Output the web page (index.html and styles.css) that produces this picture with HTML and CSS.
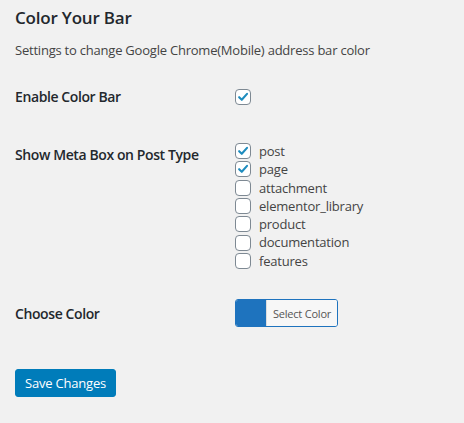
FILE: index.html
```html
<!DOCTYPE html>
<html>
<head>
<meta charset="utf-8">
<link rel="stylesheet" href="styles.css">
</head>
<body>
<div class="wrap">
  <h2 class="title">Color Your Bar</h2>
  <p class="desc">Settings to change Google Chrome(Mobile) address bar color</p>
  <div class="form-table">
    <div class="row row-enable">
      <div class="th">Enable Color Bar</div>
      <div class="td">
        <span class="cb checked"><svg viewBox="0 0 16 16"><path d="M3.6 8.2 L6.6 11.2 L12.6 4.4" /></svg></span>
      </div>
    </div>
    <div class="row">
      <div class="th">Show Meta Box on Post Type</div>
      <div class="td list">
        <label class="item"><span class="cb checked"><svg viewBox="0 0 16 16"><path d="M3.6 8.2 L6.6 11.2 L12.6 4.4" /></svg></span>post</label>
        <label class="item"><span class="cb checked"><svg viewBox="0 0 16 16"><path d="M3.6 8.2 L6.6 11.2 L12.6 4.4" /></svg></span>page</label>
        <label class="item"><span class="cb"></span>attachment</label>
        <label class="item"><span class="cb"></span>elementor_library</label>
        <label class="item"><span class="cb"></span>product</label>
        <label class="item"><span class="cb"></span>documentation</label>
        <label class="item"><span class="cb"></span>features</label>
      </div>
    </div>
    <div class="row row-color">
      <div class="th">Choose Color</div>
      <div class="td">
        <button class="color-result"><span class="swatch"></span><span class="color-text">Select Color</span></button>
      </div>
    </div>
  </div>
  <div class="submit">
    <button class="button-primary">Save Changes</button>
  </div>
</div>
</body>
</html>
```
FILE: styles.css
```css
html, body {
  margin: 0;
  padding: 0;
  background: #f1f1f1;
}
body {
  font-family: "Open Sans", "Noto Sans", sans-serif;
  font-size: 13px;
  color: #444;
}
.wrap {
  padding: 7px 15px 0 15px;
}
.title {
  margin: 0;
  font-size: 17px;
  line-height: 22px;
  font-weight: 600;
  color: #23282d;
  letter-spacing: -0.2px;
}
.desc {
  margin: 11px 0 8px 0;
  line-height: 20px;
  color: #444;
  letter-spacing: -0.22px;
}
.row {
  display: flex;
}
.th {
  width: 200px;
  padding: 20px 10px 20px 0;
  font-size: 14px;
  font-weight: 600;
  line-height: 18px;
  color: #23282d;
  letter-spacing: -0.4px;
}
.td {
  padding: 15px 10px;
  display: flex;
  flex-direction: column;
}
.row-enable .td {
  padding-top: 21px;
}
.list {
  padding-top: 16px;
}
.row-color .td {
  padding-top: 14px;
}
.item {
  display: flex;
  align-items: center;
  line-height: 18.3px;
  height: 18.3px;
  color: #444;
  letter-spacing: -0.2px;
}
.cb {
  box-sizing: border-box;
  width: 16px;
  height: 16px;
  border: 1px solid #7e8993;
  border-radius: 4px;
  background: #fff;
  display: inline-flex;
  align-items: center;
  justify-content: center;
  flex: none;
  margin-right: 8px;
}
.cb svg {
  width: 14px;
  height: 14px;
}
.cb svg path {
  fill: none;
  stroke: #1e8cbe;
  stroke-width: 2.4;
  stroke-linecap: round;
  stroke-linejoin: round;
}
.color-result {
  box-sizing: border-box;
  display: flex;
  align-items: stretch;
  width: 103px;
  height: 28px;
  padding: 0;
  margin: 0;
  border: 1px solid #1e73be;
  border-radius: 3px;
  overflow: hidden;
  background: #f7f7f7;
  font-family: inherit;
  cursor: pointer;
}
.swatch {
  width: 30px;
  background: #1e73be;
  flex: none;
}
.color-text {
  flex: 1;
  display: flex;
  align-items: center;
  justify-content: center;
  font-size: 11px;
  color: #555;
  border-left: 1px solid #ddd;
  background: #f7f7f7;
  letter-spacing: -0.2px;
}
.submit {
  padding-top: 26px;
}
.button-primary {
  box-sizing: border-box;
  height: 28px;
  width: 101px;
  padding: 0;
  white-space: nowrap;
  border: 1px solid #007cba;
  border-radius: 3px;
  background: #007cba;
  color: #fff;
  font-family: inherit;
  font-size: 13px;
  line-height: 26px;
  letter-spacing: -0.2px;
}
```
